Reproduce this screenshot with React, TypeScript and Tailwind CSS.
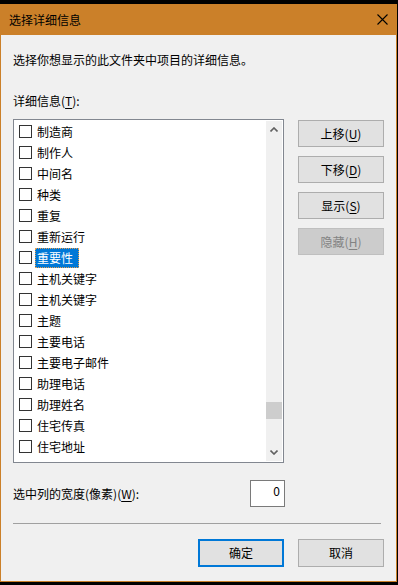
const items = [
  '制造商',
  '制作人',
  '中间名',
  '种类',
  '重复',
  '重新运行',
  '重要性',
  '主机关键字',
  '主机关键字',
  '主题',
  '主要电话',
  '主要电子邮件',
  '助理电话',
  '助理姓名',
  '住宅传真',
  '住宅地址',
]

function Label({ text, hot }: { text: string; hot: string }) {
  return (
    <>
      {text}(<span className="underline underline-offset-2">{hot}</span>)
    </>
  )
}

function SideButton({ text, hot, disabled }: { text: string; hot: string; disabled?: boolean }) {
  return (
    <button
      className={
        disabled
          ? 'flex h-[27px] w-[86px] items-center justify-center border border-[#bfbfbf] bg-[#cccccc] text-[#838383]'
          : 'flex h-[27px] w-[86px] items-center justify-center border border-[#adadad] bg-[#e1e1e1] text-black'
      }
    >
      <Label text={text} hot={hot} />
    </button>
  )
}

function Chevron({ down }: { down?: boolean }) {
  return (
    <svg width="8" height="5" viewBox="0 0 8 5" className="block">
      <polyline
        points={down ? '0.5,0.5 4,4 7.5,0.5' : '0.5,4.5 4,1 7.5,4.5'}
        fill="none"
        stroke="#606060"
        strokeWidth="1.6"
      />
    </svg>
  )
}

export default function App() {
  return (
    <div className="h-[585px] w-[398px] bg-black pt-[4px] font-['Noto_Sans_CJK_SC',sans-serif] text-[12px] leading-[16px] text-black">
      <div className="flex h-[578px] w-[397px] flex-col border-x border-b border-[#cb8029] bg-[#f0f0f0]">
        {/* title bar */}
        <div className="flex h-[31px] shrink-0 items-center justify-between bg-[#cb8029] pl-[8px] pr-[8px]">
          <span>选择详细信息</span>
          <svg width="11" height="11" viewBox="0 0 11 11">
            <path d="M0.5 0.5 L10.5 10.5 M10.5 0.5 L0.5 10.5" stroke="#000" strokeWidth="1.1" />
          </svg>
        </div>

        <div className="flex flex-1 flex-col px-[12px]">
          <p className="pt-[17px]">选择你想显示的此文件夹中项目的详细信息。</p>
          <p className="mt-[25px]">
            详细信息<Label text="" hot="T" />:
          </p>

          <div className="mt-[10px] flex">
            {/* list box */}
            <div className="flex h-[344px] w-[271px] border border-[#828790] bg-white p-[1px]">
              <div className="flex flex-1 flex-col">
                {items.map((item, i) => (
                  <div key={i} className="flex h-[21px] shrink-0 items-center pl-[4px]">
                    <span className="h-[13px] w-[13px] shrink-0 border border-[#333333] bg-white" />
                    {i === 6 ? (
                      <span className="ml-[3px] flex h-[20px] items-center border border-dotted border-[#e8a050] bg-[#0078d7] pl-[1px] pr-[5px] text-white">
                        {item}
                      </span>
                    ) : (
                      <span className="ml-[5px]">{item}</span>
                    )}
                  </div>
                ))}
              </div>
              {/* scrollbar */}
              <div className="flex w-[16px] flex-col bg-[#f0f0f0]">
                <div className="flex h-[17px] items-center justify-center">
                  <Chevron />
                </div>
                <div className="flex flex-1 flex-col justify-end pb-[25px]">
                  <div className="h-[17px] bg-[#cdcdcd]" />
                </div>
                <div className="flex h-[17px] items-center justify-center">
                  <Chevron down />
                </div>
              </div>
            </div>

            {/* side buttons */}
            <div className="ml-[14px] mt-[1px] flex flex-col gap-[9px]">
              <SideButton text="上移" hot="U" />
              <SideButton text="下移" hot="D" />
              <SideButton text="显示" hot="S" />
              <SideButton text="隐藏" hot="H" disabled />
            </div>
          </div>

          {/* width row */}
          <div className="mt-[17px] flex w-[272px] items-center justify-between">
            <span>
              选中列的宽度(像素)<Label text="" hot="W" />:
            </span>
            <div className="h-[27px] w-[35px] border border-[#7a7a7a] bg-white pr-[4px] pt-[2px] text-right">0</div>
          </div>

          <div className="mt-[16px] h-px w-[368px] bg-[#a0a0a0]" />

          <div className="mt-[15px] flex justify-end gap-[14px]">
            <button className="flex h-[28px] w-[86px] items-center justify-center border-2 border-[#0078d7] bg-[#e1e1e1]">
              确定
            </button>
            <button className="flex h-[28px] w-[86px] items-center justify-center border border-[#adadad] bg-[#e1e1e1]">
              取消
            </button>
          </div>
        </div>
      </div>
    </div>
  )
}
